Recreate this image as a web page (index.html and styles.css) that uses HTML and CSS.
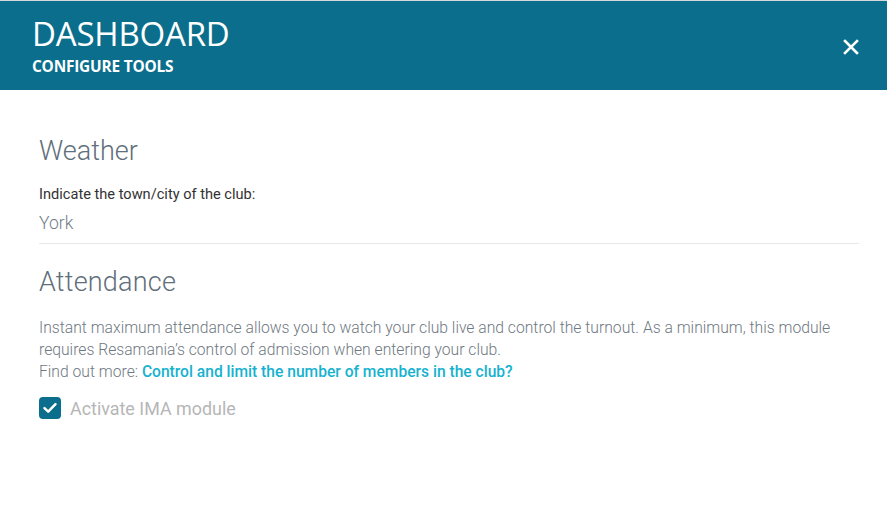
FILE: index.html
```html
<!DOCTYPE html>
<html>
<head>
<meta charset="utf-8">
<link rel="stylesheet" href="styles.css">
</head>
<body>
<div class="modal">
  <header class="head">
    <div class="titles">
      <h1 class="title">DASHBOARD</h1>
      <div class="subtitle">CONFIGURE TOOLS</div>
    </div>
    <button class="close" aria-label="close">
      <svg width="16" height="16" viewBox="0 0 16 16"><path d="M2 2 L14 14 M14 2 L2 14" stroke="#fff" stroke-width="2.6" stroke-linecap="square"/></svg>
    </button>
  </header>
  <main class="body">
    <section class="weather">
      <h2 class="section-title">Weather</h2>
      <label class="field-label">Indicate the town/city of the club:</label>
      <div class="field-value">York</div>
    </section>
    <section class="attendance">
      <h2 class="section-title">Attendance</h2>
      <p class="desc">Instant maximum attendance allows you to watch your club live and control the turnout. As a minimum, this module requires Resamania’s control of admission when entering your club.<br>Find out more: <a class="link" href="#">Control and limit the number of members in the club?</a></p>
      <div class="check">
        <span class="box"><svg width="16" height="14" viewBox="0 0 16 14"><path d="M2.5 7.2 L6.2 10.6 L13.5 3.2" fill="none" stroke="#fff" stroke-width="2.5" stroke-linecap="round" stroke-linejoin="round"/></svg></span>
        <span class="check-label">Activate IMA module</span>
      </div>
    </section>
  </main>
</div>
</body>
</html>
```
FILE: styles.css
```css
html, body { margin: 0; padding: 0; background: #fff; }
body { font-family: Roboto, "Noto Sans", sans-serif; }
.modal { width: 887px; height: 507px; border-top: 1px solid #d6dadc; box-sizing: border-box; }
.head {
  background: #0a6e8c;
  height: 89px;
  display: flex;
  justify-content: space-between;
  align-items: center;
  padding: 0 28px 0 32px;
}
.titles { display: flex; flex-direction: column; }
.title {
  margin: 0;
  font-family: "Open Sans", sans-serif;
  font-weight: 400;
  font-size: 33px;
  line-height: 40px;
  color: #fff;
  letter-spacing: -0.2px;
}
.subtitle {
  font-family: "Open Sans", sans-serif;
  font-weight: 700;
  font-size: 15.4px;
  line-height: 20px;
  color: #fff;
  margin-top: 3px;
  letter-spacing: -0.2px;
}
.close { background: none; border: 0; padding: 0; width: 16px; height: 16px; margin-top: 2px; cursor: pointer; }
.close svg { display: block; }
.body { padding: 45px 28px 0 39px; }
.section-title {
  margin: 0;
  font-weight: 300;
  font-size: 27px;
  line-height: 32px;
  color: #5f6f7b;
}
.attendance .section-title { letter-spacing: 0.2px; }
.weather { border-bottom: 1px solid #e8e8e8; padding-bottom: 10px; }
.field-label { display: block; margin-top: 18px; font-size: 14.6px; font-weight: 400; color: #333; line-height: 18px; }
.field-value { margin-top: 10px; font-size: 17.5px; font-weight: 300; color: #6f7d88; line-height: 20px; }
.attendance { padding-top: 22px; }
.desc { margin: 19px 0 0; font-size: 15.7px; font-weight: 300; line-height: 22px; color: #6f7982; }
.link { color: #17b2cf; font-weight: 500; text-decoration: none; font-size: 15.6px; }
.check { display: flex; align-items: center; gap: 9px; margin-top: 14px; }
.box {
  width: 22px; height: 22px; border-radius: 4px; background: #0a6e8c;
  display: flex; align-items: center; justify-content: center;
}
.box svg { display: block; }
.check-label { font-size: 17.9px; color: #b6b6b6; font-weight: 400; }
```
